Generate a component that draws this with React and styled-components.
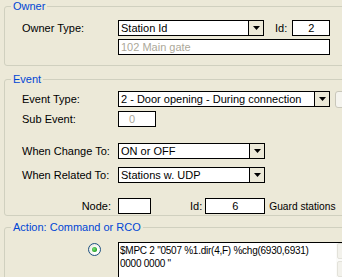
import React from 'react';
import styled, {createGlobalStyle} from 'styled-components';

const GlobalStyle = createGlobalStyle`
  html, body {
    margin: 0;
    padding: 0;
    background: #ECE9D8;
  }
  body {
    font-family: "Liberation Sans", Arial, sans-serif;
    font-size: 11px;
    color: #000;
  }
`;

const Window = styled.div`
  width: 342px;
  height: 277px;
  overflow: hidden;
  background: #ECE9D8;
  display: flex;
  flex-direction: column;
  padding-left: 4px;
  box-sizing: border-box;
`;

const Group = styled.fieldset`
  margin: ${p => p.$top || 0}px 0 0 0;
  width: 372px;
  min-width: 0;
  flex-shrink: 0;
  box-sizing: border-box;
  border: 1px solid #D0D0BF;
  border-radius: 3px;
  padding: ${p => p.$padTop}px 0 ${p => p.$padBottom}px 0;
`;

const Legend = styled.legend`
  color: #0046D5;
  padding: 0 2px;
  margin-left: 6px;
  line-height: 13px;
  font-size: 11px;
`;

const Body = styled.div`
  padding-left: 17px;
  display: flex;
  flex-direction: column;
`;

const Row = styled.div`
  display: flex;
  align-items: ${p => p.$top ? 'flex-start' : 'center'};
  height: ${p => p.$h || 16}px;
  margin-top: ${p => p.$gap || 0}px;
`;

const Label = styled.div`
  width: 96px;
  flex-shrink: 0;
  box-sizing: border-box;
  text-align: ${p => p.$right ? 'right' : 'left'};
  padding-right: ${p => p.$right ? 7 : 0}px;
  white-space: nowrap;
`;

const Combo = styled.div`
  width: ${p => p.$w}px;
  height: 16px;
  box-sizing: border-box;
  border: 1px solid #000;
  background: #fff;
  display: flex;
  flex-shrink: 0;
`;

const ComboText = styled.div`
  flex: 1;
  padding-left: 2px;
  line-height: 14px;
  white-space: nowrap;
  overflow: hidden;
`;

const Arrow = styled.div`
  width: 15px;
  box-sizing: border-box;
  border-left: 1px solid #000;
  background: #ECE9D8;
  display: flex;
  align-items: center;
  justify-content: center;
`;

const Field = styled.div`
  width: ${p => p.$w}px;
  height: 16px;
  flex-shrink: 0;
  box-sizing: border-box;
  border: 1px solid #000;
  background: #fff;
  color: ${p => p.$disabled ? '#ACA899' : '#000'};
  text-align: ${p => p.$center ? 'center' : 'left'};
  padding: 0 ${p => p.$pad ?? 2}px;
  line-height: 14px;
  white-space: nowrap;
  overflow: hidden;
`;

const Text = styled.div`
  margin-left: ${p => p.$ml || 0}px;
  margin-right: ${p => p.$mr || 0}px;
  white-space: nowrap;
  flex-shrink: 0;
  font-size: ${p => p.$small ? '10.2px' : '11px'};
`;

const SideButton = styled.div`
  width: 22px;
  height: 17px;
  margin-left: 5px;
  flex-shrink: 0;
  box-sizing: border-box;
  border: 1px solid #C9C7BA;
  border-radius: 3px;
  background: #F5F4EE;
`;

const Radio = styled.div`
  width: 13px;
  height: 13px;
  margin: 1px 17px 0 66px;
  flex-shrink: 0;
  box-sizing: border-box;
  border: 1px solid #1C5180;
  border-radius: 50%;
  background: radial-gradient(circle at 60% 60%, #FFFFFF 30%, #DCDBD2 100%);
  display: flex;
  align-items: center;
  justify-content: center;
`;

const Dot = styled.div`
  width: 5px;
  height: 5px;
  border-radius: 50%;
  background: radial-gradient(circle at 40% 40%, #7CE07C 0%, #21A121 70%);
`;

const Memo = styled.div`
  width: 240px;
  height: 60px;
  flex-shrink: 0;
  box-sizing: border-box;
  border: 1px solid #000;
  background: #fff;
  display: flex;
`;

const MemoText = styled.div`
  width: 216px;
  padding: 1px 0 0 1px;
  line-height: 13px;
  font-size: 10px;
  letter-spacing: -0.25px;
  white-space: nowrap;
  overflow: hidden;
`;

const ScrollBar = styled.div`
  width: 17px;
  padding-left: 1px;
  display: flex;
  flex-direction: column;
  gap: 2px;
  background: #FBFBF9;
`;

const ScrollButton = styled.div`
  height: 16px;
  box-sizing: border-box;
  border: 1px solid #E3E2DA;
  border-radius: 2px;
  background: #F3F2EC;
  display: flex;
  align-items: center;
  justify-content: center;
`;

const DownTriangle = () => (
  <svg width="7" height="4" viewBox="0 0 7 4">
    <polygon points="0,0 7,0 3.5,4" fill="#000" />
  </svg>
);

const Chevron = ({down}) => (
  <svg width="7" height="5" viewBox="0 0 7 5">
    <polyline points={down ? '1,1 3.5,3.5 6,1' : '1,4 3.5,1.5 6,4'} fill="none" stroke="#C8C6BC" strokeWidth="1.4" />
  </svg>
);

const ComboBox = ({w, value}) => (
  <Combo $w={w}>
    <ComboText>{value}</ComboText>
    <Arrow><DownTriangle /></Arrow>
  </Combo>
);

export default function App() {
  return (
    <Window>
      <GlobalStyle />
      <Group $padTop={7} $padBottom={10}>
        <Legend>Owner</Legend>
        <Body>
          <Row>
            <Label>Owner Type:</Label>
            <ComboBox w={146} value="Station Id" />
            <Text $ml={11} $mr={5}>Id:</Text>
            <Field $w={38} $center>2</Field>
          </Row>
          <Row $gap={3}>
            <Label />
            <Field $w={212} $disabled>102 Main gate</Field>
          </Row>
        </Body>
      </Group>

      <Group $top={7} $padTop={5} $padBottom={1}>
        <Legend>Event</Legend>
        <Body>
          <Row>
            <Label>Event Type:</Label>
            <ComboBox w={212} value="2 - Door opening - During connection" />
            <SideButton />
          </Row>
          <Row $gap={4}>
            <Label>Sub Event:</Label>
            <Field $w={38} $disabled $pad={10}>0</Field>
          </Row>
          <Row $gap={16}>
            <Label>When Change To:</Label>
            <ComboBox w={147} value="ON or OFF" />
          </Row>
          <Row $gap={8}>
            <Label>When Related To:</Label>
            <ComboBox w={147} value="Stations w. UDP" />
          </Row>
          <Row $gap={15}>
            <Label $right>Node:</Label>
            <Field $w={33} />
            <Text $ml={39} $mr={3}>Id:</Text>
            <Field $w={60} $center>6</Field>
            <Text $ml={4} $small>Guard stations</Text>
          </Row>
        </Body>
      </Group>

      <Group $top={5} $padTop={8} $padBottom={0}>
        <Legend>Action: Command or RCO</Legend>
        <Body>
          <Row $top $h={60}>
            <Radio><Dot /></Radio>
            <Memo>
              <MemoText>
                $MPC 2 "0507 %1.dir(4,F) %chg(6930,6931)<br />
                0000 0000 "
              </MemoText>
              <ScrollBar>
                <ScrollButton><Chevron /></ScrollButton>
                <ScrollButton><Chevron down /></ScrollButton>
              </ScrollBar>
            </Memo>
          </Row>
        </Body>
      </Group>
    </Window>
  );
}
